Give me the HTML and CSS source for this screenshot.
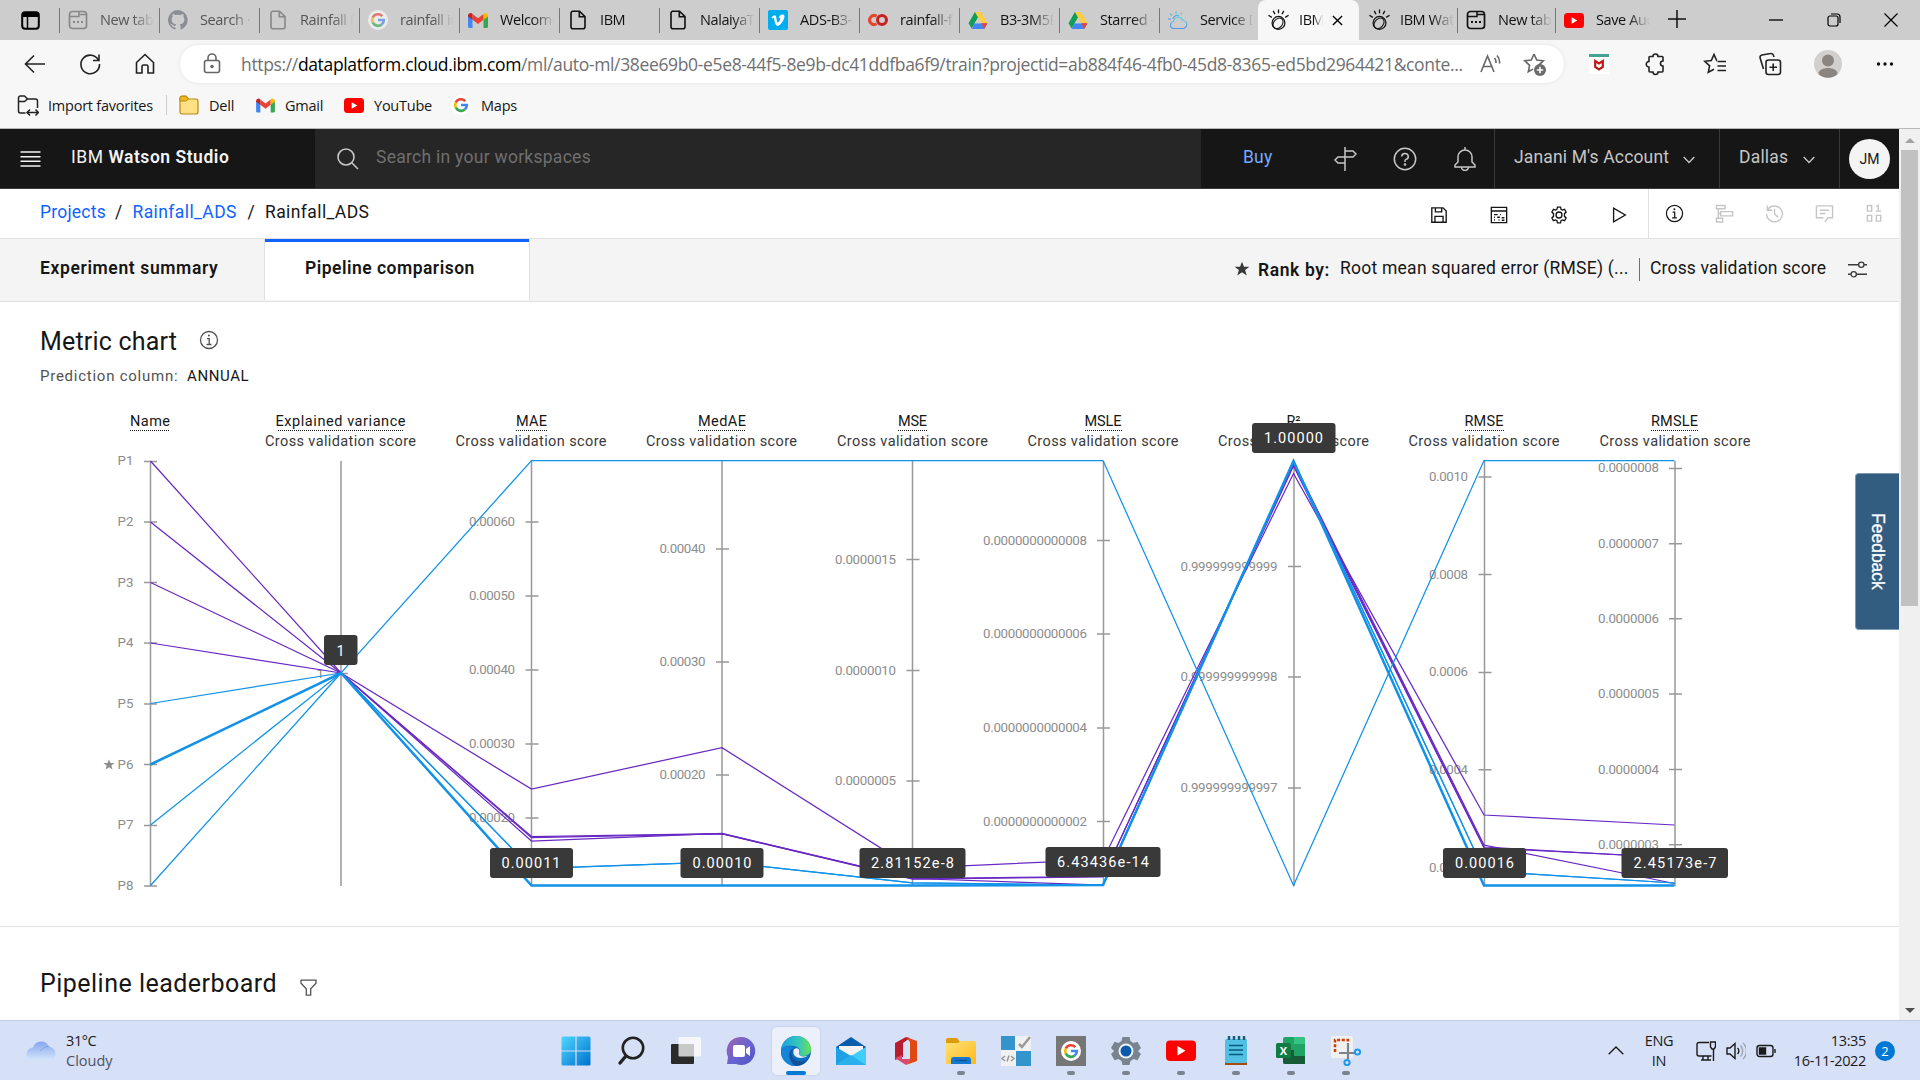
FILE: index.html
```html
<!DOCTYPE html>
<html lang="en">
<head>
<meta charset="utf-8">
<title>IBM Watson Studio</title>
<link rel="stylesheet" href="styles.css">
</head>
<body>
<svg class="defs" width="0" height="0">
  <defs>
    <symbol id="page" viewBox="0 0 20 20"><path d="M4 1.2h7.5L17 6.700v10a2 2 0 0 1-2 2H5a2 2 0 0 1-2-2v-13.500a2 2 0 0 1 2-2zM11.300 1.500v5.300h5.400" fill="none" stroke="currentColor" stroke-width="1.600"/></symbol>
    <symbol id="newtab" viewBox="0 0 20 20"><rect x="1.500" y="1.500" width="17" height="17" rx="3" fill="none" stroke="currentColor" stroke-width="1.700"/><path d="M2 6.500h9V2M11 4.500h7" fill="none" stroke="currentColor" stroke-width="1.500"/><path d="M5 11h2v2H5zM9 11h2v2H9zM13 11h2v2h-2z" fill="currentColor"/></symbol>
    <symbol id="google" viewBox="0 0 24 24"><circle cx="12" cy="12" r="12" fill="#fff"/><g fill="none" stroke-width="3.200"><path d="M17.100 7.300A7 7 0 0 0 5.700 9" stroke="#ea4335"/><path d="M5.700 9a7 7 0 0 0 0 6.100" stroke="#fbbc05"/><path d="M5.700 15a7 7 0 0 0 10.800 2.300" stroke="#34a853"/><path d="M16.500 17.300A7 7 0 0 0 19 12h-7" stroke="#4285f4"/></g></symbol>
    <symbol id="gmail" viewBox="0 0 20 16"><path d="M0 3v11a1.500 1.500 0 0 0 1.500 1.500H4.500V6z" fill="#4285f4"/><path d="M20 3v11a1.500 1.500 0 0 1-1.500 1.500h-3V6z" fill="#34a853"/><path d="M4.500 1.600L10 5.800l5.500-4.200v5.700L10 11.500 4.500 7.300z" fill="#ea4335"/><path d="M0 3a2.500 2.500 0 0 1 4.500-1.400v5.700L0 4z" fill="#c5221f"/><path d="M20 3a2.500 2.500 0 0 0-4.500-1.400v5.700L20 4z" fill="#fbbc04"/></symbol>
    <symbol id="youtube" viewBox="0 0 20 15"><rect width="20" height="15" rx="3.500" fill="#f00"/><path d="M7.700 4.300v6.400l5.600-3.200z" fill="#fff"/></symbol>
    <symbol id="drive" viewBox="0 0 20 18"><path d="M6.700 0h6.600L6.500 12 3.300 17.500 0 12z" fill="#0f9d58"/><path d="M6.700 0h6.600L20 12h-6.500z" fill="#ffcd40"/><path d="M6.500 12H20l-3.300 6H3.300z" fill="#4285f4"/><path d="M6.500 12L10 6l3.500 6z" fill="#cdcdcd"/><path d="M13.500 12H20l-3.300 6z" fill="#ea4335"/></symbol>
    <symbol id="watson" viewBox="0 0 24 24"><g fill="none" stroke="currentColor"><circle cx="12" cy="15" r="6.700" stroke-width="1.300"/><ellipse cx="11.500" cy="15.500" rx="4.500" ry="6.200" transform="rotate(40 11.500 15.500)" stroke-width="1.100"/><path d="M12 1v4M6.500 2.500l1.800 3.500M17.500 2.500l-1.800 3.500M1.500 7l3.500 2.200M22.500 7l-3.500 2.200" stroke-width="1.400"/></g></symbol>
    <symbol id="chevron" viewBox="0 0 12 8"><path d="M.7 1L6 6.600 11.300 1" fill="none" stroke="currentColor" stroke-width="1.400"/></symbol>
    <symbol id="info" viewBox="0 0 20 20"><g fill="none" stroke="currentColor" stroke-width="1.300"><circle cx="10" cy="10" r="8.500"/><path d="M8 8.600h2.200v5.500M7.500 14.500h5"/></g><circle cx="9.900" cy="5.600" r="1" fill="currentColor"/></symbol>
    <symbol id="star" viewBox="0 0 20 20"><path d="M10 .8l2.500 6.300h6.800l-5.400 4.200 2 6.900L10 14.200l-5.900 4 2-6.900L.7 7.100h6.800z" fill="currentColor"/></symbol>
    <linearGradient id="gw" x1="0" y1="0" x2="1" y2="1"><stop offset="0" stop-color="#4ed6ff"/><stop offset="1" stop-color="#0071ce"/></linearGradient>
    <linearGradient id="gc" x1="0" y1="0" x2="0" y2="1"><stop offset="0" stop-color="#85a8ee"/><stop offset="1" stop-color="#d5e5fb"/></linearGradient>
    <linearGradient id="gf" x1="0" y1="0" x2="1" y2="1"><stop offset="0" stop-color="#ffe274"/><stop offset="1" stop-color="#ffb81f"/></linearGradient>
    <linearGradient id="ge" x1="0" y1="0" x2="1" y2="0"><stop offset="0" stop-color="#1a9fe0"/><stop offset=".6" stop-color="#35c9b9"/><stop offset="1" stop-color="#6be052"/></linearGradient>
    <linearGradient id="gt" x1="0" y1="0" x2="1" y2="1"><stop offset="0" stop-color="#a064a8"/><stop offset=".5" stop-color="#6a64d2"/><stop offset="1" stop-color="#4e54c0"/></linearGradient>
    <linearGradient id="gs" x1="0" y1="0" x2="0" y2="1"><stop offset="0" stop-color="#5fd3dc"/><stop offset="1" stop-color="#5a94ee"/></linearGradient>
  </defs>
</svg>

<header class="tabstrip">
  <div class="tab-actions"><svg width="19" height="19" viewBox="0 0 19 19"><rect x="1.200" y="1.200" width="16.600" height="16.600" rx="3" fill="none" stroke="#000" stroke-width="2"/><path d="M1 2h17v4H1z"/><path d="M6.500 5v12" stroke="#000" stroke-width="1.500"/></svg></div>
  <div class="tab asleep"><svg><use href="#newtab"/></svg><span>New tab</span></div>
  <div class="tab asleep"><svg viewBox="0 0 16 16"><path fill="#8b8f94" d="M8 0a8 8 0 0 0-2.500 15.600c.4.100.500-.200.500-.4v-1.500c-2.200.500-2.700-1-2.700-1-.4-.9-.9-1.200-.9-1.200-.7-.5.1-.5.1-.5.800.1 1.200.8 1.200.8.700 1.300 1.900.9 2.300.7.100-.5.300-.9.500-1.100-1.800-.2-3.600-.9-3.600-4 0-.9.300-1.600.8-2.100-.1-.2-.4-1 .1-2.100 0 0 .7-.2 2.200.8a7.700 7.700 0 0 1 4 0c1.500-1 2.200-.8 2.200-.8.400 1.100.2 1.900.1 2.100.5.600.8 1.300.8 2.100 0 3.100-1.900 3.800-3.700 4 .3.300.6.800.6 1.500v2.200c0 .200.100.5.500.4A8 8 0 0 0 8 0z"/></svg><span>Search ·</span></div>
  <div class="tab asleep"><svg><use href="#page"/></svg><span>Rainfall P</span></div>
  <div class="tab asleep"><svg class="dim"><use href="#google"/></svg><span>rainfall in</span></div>
  <div class="tab"><svg class="wide"><use href="#gmail"/></svg><span>Welcome</span></div>
  <div class="tab"><svg><use href="#page"/></svg><span>IBM</span></div>
  <div class="tab"><svg><use href="#page"/></svg><span>NalaiyaTh</span></div>
  <div class="tab"><svg viewBox="0 0 20 20"><rect width="20" height="20" rx="2" fill="#00adef"/><path d="M3.500 7.500C6 5 7.700 4 8.300 7.500c.5 3.200.9 5 1.600 5 1 0 2.500-3 2.300-4-.2-.9-1.200-.4-1.600-.2C11.300 5.500 13 4.300 15 4.600c3 .5 1 5.700-1.600 8.700-2.500 2.900-4.800 4-6.200.3L5.800 8.300c-.3-.9-.8-.4-1.600.2z" fill="#fff"/></svg><span>ADS-B3-3</span></div>
  <div class="tab"><svg viewBox="0 0 20 20" fill="none" stroke-width="3"><path d="M8.600 6.200a4.500 4.500 0 1 0 0 7.600" stroke="#e8432e"/><circle cx="14" cy="10" r="4.500" stroke="#c5221f"/></svg><span>rainfall-f</span></div>
  <div class="tab"><svg class="wide"><use href="#drive"/></svg><span>B3-3M5E</span></div>
  <div class="tab"><svg class="wide"><use href="#drive"/></svg><span>Starred -</span></div>
  <div class="tab w99"><svg viewBox="0 0 20 20" fill="none" stroke="url(#gs)" stroke-width="1.200"><path d="M5 18.500h9.500a4 4 0 0 0 .5-8 5 5 0 0 0-9.500 1A3.600 3.600 0 0 0 5 18.500z"/><path d="M5 9a4 4 0 0 1 6-3M8 4V1M4 5.500L2 3.500M12.500 4.500l1.500-2M3 9H0"/></svg><span>Service D</span></div>
  <div class="tab active"><svg class="big"><use href="#watson"/></svg><span>IBM</span><svg class="x" viewBox="0 0 12 12"><path d="M1 1l10 10M11 1L1 11" stroke="#000" stroke-width="1.500"/></svg></div>
  <div class="tab w98 nosep"><svg class="big"><use href="#watson"/></svg><span>IBM Wat</span></div>
  <div class="tab w98"><svg><use href="#newtab"/></svg><span>New tab</span></div>
  <div class="tab w99"><svg class="yt"><use href="#youtube"/></svg><span>Save Aud</span></div>
  <div class="plus"><svg width="18" height="18" viewBox="0 0 18 18"><path d="M9 0v18M0 9h18" stroke="#111" stroke-width="1.500"/></svg></div>
  <div class="winctl">
    <svg viewBox="0 0 14 14"><path d="M0 7h14" stroke="#000" stroke-width="1.300"/></svg>
    <svg viewBox="0 0 14 14" fill="none" stroke="#000" stroke-width="1.200"><rect x="1" y="3" width="10" height="10" rx="2"/><path d="M4 1h6a3 3 0 0 1 3 3v6"/></svg>
    <svg viewBox="0 0 14 14"><path d="M.5.5l13 13M13.500.5l-13 13" stroke="#000" stroke-width="1.200"/></svg>
  </div>
</header>

<div class="toolbar">
  <svg viewBox="0 0 24 24"><path d="M22 12H3M11 3.500L2.500 12l8.500 8.500"/></svg>
  <svg viewBox="0 0 24 24"><path d="M20.500 8.200A9.300 9.300 0 1 0 21.500 12M21 2.500v6h-6"/></svg>
  <svg viewBox="0 0 24 24"><path d="M3.500 10.500L12 2.500l8.500 8V21h-5.500v-6.500a1.500 1.500 0 0 0-1.500-1.500h-3A1.500 1.500 0 0 0 9 14.500V21H3.500z"/></svg>
  <div class="address">
    <svg class="lock" viewBox="0 0 20 22"><rect x="2.500" y="7.500" width="15" height="12" rx="2"/><path d="M6 7.500V5a4 4 0 0 1 8 0v2.500"/><circle cx="10" cy="13.500" r="1" fill="#666"/></svg>
    <span class="url">https://<b>dataplatform.cloud.ibm.com</b>/ml/auto-ml/38ee69b0-e5e8-44f5-8e9b-dc41ddfba6f9/train?projectid=ab884f46-4fb0-45d8-8365-ed5bd2964421&amp;conte...</span>
    <svg class="aloud" viewBox="0 0 22 20"><path d="M1 18L7.500 2 14 18M3.500 12.500h8M14.500 4a7 7 0 0 1 1.500 5M17 1.500a10 10 0 0 1 2.500 8"/></svg>
    <svg class="favadd" viewBox="0 0 24 24"><path d="M11 2l2.800 6 6.500.8-4.800 4.500.5 1M11 2L8.300 8l-6.500.8 4.800 4.500-1.300 6.500 4.700-2.700"/><circle cx="17" cy="18" r="6" fill="#6b6b6b" stroke="none"/><path d="M17 14.800v6.400M13.800 18h6.400" stroke="#fff"/></svg>
  </div>
  <svg class="shield" viewBox="0 0 20 20"><path d="M0 2h20v18H0z" fill="#fff" stroke="none"/><path d="M0 0h20v3H0z" fill="#43a390" stroke="none"/><path d="M6.200 7v6l3.800 2.500 3.800-2.500V7L10 9.500z" fill="none" stroke="#c01818" stroke-width="2.200"/></svg>
  <svg class="puzzle" viewBox="0 0 24 24"><path d="M7 4.500h3a2.500 2.500 0 0 1 5 0h4a1 1 0 0 1 1 1V9a2.500 2.500 0 0 0 0 5v5a1 1 0 0 1-1 1h-4a2.500 2.500 0 0 1-5 0H7a1 1 0 0 1-1-1v-4a2.600 2.600 0 1 1 0-5.500V5.500a1 1 0 0 1 1-1z"/></svg>
  <i class="vsep"></i>
  <svg viewBox="0 0 24 24"><path d="M14 8.500h-.3L11 2.500 8.300 8.500 1.800 9.300l4.800 4.500-1.300 6.500 5.700-3M14.500 9.500H23M14.500 14H23M14.500 18.500H23"/></svg>
  <svg viewBox="0 0 24 24"><rect x="8" y="8" width="14.500" height="14.500" rx="2.500"/><path d="M15.200 11.500v7.500M11.500 15.200H19M5.500 17L2 5.500A2.500 2.500 0 0 1 4 3l8.500-1.500a2.500 2.500 0 0 1 3 2l.5 1.500"/></svg>
  <svg class="user" viewBox="0 0 28 28"><circle cx="14" cy="14" r="14" fill="#d2d0ce"/><circle cx="14" cy="10.500" r="6" fill="#8a8580"/><path d="M4.500 24c0-8 19-8 19 0a14 14 0 0 1-19 0z" fill="#8a8580"/></svg>
  <svg viewBox="0 0 24 24"><g fill="#111" stroke="none"><circle cx="5.500" cy="12" r="1.700"/><circle cx="12" cy="12" r="1.700"/><circle cx="18.500" cy="12" r="1.700"/></g></svg>
</div>

<div class="bookmarks">
  <svg width="22" height="22" viewBox="0 0 22 22" fill="none" stroke="#222" stroke-width="1.500"><path d="M8.500 19H3.500a2 2 0 0 1-2-2V4a2 2 0 0 1 2-2h4l3 3h8a2 2 0 0 1 2 2v7M1.500 7.500h6l3-2.500M10.500 18.500H21M13 15.500l-3 3 3 3M18.500 15.500l3 3-3 3"/></svg><span>Import favorites</span><i></i>
  <svg width="20" height="20" viewBox="0 0 20 20"><path d="M1 3a2 2 0 0 1 2-2h4l2.500 3H17a2 2 0 0 1 2 2v11a2 2 0 0 1-2 2H3a2 2 0 0 1-2-2z" fill="#ffe082" stroke="#b88a18" stroke-width="1.200"/><path d="M1 6h6l2.500-2L7 1.300H3a2 2 0 0 0-2 2z" fill="#f4b81c" stroke="#b88a18"/></svg><span>Dell</span>
  <svg width="19" height="15"><use href="#gmail"/></svg><span>Gmail</span>
  <svg width="20" height="15"><use href="#youtube"/></svg><span>YouTube</span>
  <svg width="20" height="20"><use href="#google"/></svg><span>Maps</span>
</div>

<div class="viewport">
<main class="app">
  <nav class="shell">
    <svg class="burger" viewBox="0 0 20 16"><path d="M0 1h20M0 5.700h20M0 10.300h20M0 15h20" stroke="#f4f4f4" stroke-width="1.400"/></svg>
    <div class="brand">IBM <b>Watson Studio</b></div>
    <div class="search"><svg width="22" height="22" viewBox="0 0 22 22" fill="none" stroke="#c6c6c6" stroke-width="1.600"><circle cx="9" cy="9" r="8"/><path d="M14.800 14.800L21 21"/></svg><span>Search in your workspaces</span></div>
    <span class="buy">Buy</span>
    <svg class="sic" viewBox="0 0 24 24"><path d="M12 0v24M12 4h8l3 3-3 3h-8zM12 10H5l-3 3 3 3h7z"/></svg>
    <svg class="sic" viewBox="0 0 24 24"><circle cx="12" cy="12" r="10.700"/><path d="M8.700 9.500a3.300 3 0 1 1 4.300 2.900q-1 .4-1 1.500v1"/><circle cx="12" cy="17.500" r=".6"/></svg>
    <svg class="sic" viewBox="0 0 24 24"><path d="M12 0v3M12 3a7 7 0 0 0-7 7v5l-3 3v2h20v-2l-3-3v-5a7 7 0 0 0-7-7zM8.500 20a3.500 3.500 0 0 0 7 0"/></svg>
    <div class="menu account"><span>Janani M's Account</span><svg class="chev"><use href="#chevron"/></svg></div>
    <div class="menu region"><span>Dallas</span><svg class="chev"><use href="#chevron"/></svg></div>
    <div class="menu me"><span class="avatar">JM</span></div>
  </nav>

  <div class="crumbs">
    <a class="c1">Projects</a><i>/</i><a>Rainfall_ADS</a><i>/</i><span>Rainfall_ADS</span>
    <div class="actions">
      <svg viewBox="0 0 20 20"><path d="M2 2h12.500L18 5.500V18H2zM6 2v4.500h7V2M5.500 18v-6.500h9V18"/></svg>
      <svg viewBox="0 0 20 20"><path d="M1.500 1.500h17v17h-17zM1.500 5.500h17M4.500 9.500h4M11 9.500h1M4.500 12.500h1M8 12.500h3M4.500 15.500h1M9.500 15.500h1M13 13h3M13 15.800h3"/></svg>
      <svg viewBox="0 0 20 20"><circle cx="10" cy="10" r="3.300"/><path d="M8.300 1.300h3.400l.6 2.500 1.500.8 2.400-.8 1.700 2.900-1.800 1.800v3l1.800 1.800-1.700 2.900-2.400-.8-1.500.8-.6 2.500H8.300l-.6-2.500-1.500-.8-2.400.8-1.700-2.900 1.800-1.800v-3L2.100 6.700l1.700-2.900 2.400.8 1.500-.8z"/></svg>
      <svg viewBox="0 0 20 20"><path d="M4 2.500v15L17 10z"/></svg>
    </div>
    <div class="panels">
      <svg class="on"><use href="#info"/></svg>
      <svg viewBox="0 0 20 20"><path d="M1.500 1.500h9V5h-9zM6 8h12.500v4.500H6zM1.500 15H8v4H1.500zM3.500 5v10M3.500 10H6"/></svg>
      <svg viewBox="0 0 20 20"><path d="M2.500 1.500v5h5M3 6a8.300 8.300 0 1 1-1.300 4.500M10 5v5.500l4 3.500"/></svg>
      <svg viewBox="0 0 20 20"><path d="M1.500 2h17v12.500h-5L10.500 19M1.500 2v12.500H9M5 6.500h10M5 10h6"/></svg>
      <svg viewBox="0 0 20 20"><path d="M2.500 1.500H7v6H2.500zM2.500 12H7v6H2.500zM12 12h4.500v6H12zM12 2.500l2-1v6M11.500 7.500H17"/></svg>
    </div>
  </div>

  <div class="subtabs">
    <div class="st">Experiment summary</div><div class="st sel"><span>Pipeline comparison</span></div>
    <div class="rank">
      <svg class="rstar"><use href="#star"/></svg><b>Rank by:</b><span class="metric">Root mean squared error (RMSE) (...</span><i></i><span class="cv">Cross validation score</span>
      <svg class="tune" viewBox="0 0 20 20" fill="none" stroke="#393939" stroke-width="1.400"><path d="M0 5h11M17 5h3M0 15h3M9 15h11"/><circle cx="14" cy="5" r="2.800"/><circle cx="6" cy="15" r="2.800"/></svg>
    </div>
  </div>

  <section class="metric-card">
    <div class="head"><h2>Metric chart</h2><svg><use href="#info"/></svg></div>
    <p><span>Prediction column:</span> <em>ANNUAL</em></p>
    <svg class="chart" viewBox="0 400 1899 500" width="1899" height="500">
      <g class="hd">
        <text x="150" y="426" textLength="40">Name</text>
        <text x="340.500" y="426" textLength="130">Explained variance</text>
        <text x="531.500" y="426" textLength="31">MAE</text>
        <text x="722" y="426" textLength="48">MedAE</text>
        <text x="912.500" y="426" textLength="29">MSE</text>
        <text x="1103" y="426" textLength="37">MSLE</text>
        <text x="1293.500" y="426" textLength="14">R²</text>
        <text x="1484" y="426" textLength="39">RMSE</text>
        <text x="1674.500" y="426" textLength="47">RMSLE</text>
      </g>
      <path class="dots" d="M130 430.500h40M278 430.500h125M516 430.500h31M698 430.500h48M898 430.500h29M1085 430.500h37M1465 430.500h39M1651 430.500h47"/>
      <g class="cvs">
        <text x="340.500" y="446" textLength="151">Cross validation score</text>
        <text x="531" y="446" textLength="151">Cross validation score</text>
        <text x="721.500" y="446" textLength="151">Cross validation score</text>
        <text x="912.500" y="446" textLength="151">Cross validation score</text>
        <text x="1103" y="446" textLength="151">Cross validation score</text>
        <text x="1293.500" y="446" textLength="151">Cross validation score</text>
        <text x="1484" y="446" textLength="151">Cross validation score</text>
        <text x="1675" y="446" textLength="151">Cross validation score</text>
      </g>
      <path class="axes" d="M150.500 461v425M341 461v425M531.500 461v425M722 461v425M912.500 461v425M1103.500 461v425M1294 461v425M1484.500 461v425M1675 461v425
        M144 461.500h13M144 522h13M144 582.500h13M144 643h13M144 704h13M144 764.500h13M144 825.500h13M144 886h13M335 673.500h13
        M525.500 522h13M525.500 596h13M525.500 670h13M525.500 744h13M525.500 818h13
        M716 549h13M716 662h13M716 775h13
        M906.500 559.500h13M906.500 670.500h13M906.500 781h13
        M1097 540.500h13M1097 634h13M1097 728h13M1097 821.500h13
        M1288 566.500h13M1288 677h13M1288 788h13
        M1478.500 477h13M1478.500 574.500h13M1478.500 672.500h13M1478.500 769.700h13M1478.500 867h13
        M1669 468.500h13M1669 543.700h13M1669 618.800h13M1669 694h13M1669 769.500h13M1669 844.700h13"/>
      <g class="tick">
        <text x="133.500" y="465" textLength="16">P1</text><text x="133.500" y="526" textLength="16">P2</text><text x="133.500" y="586.500" textLength="16">P3</text><text x="133.500" y="647" textLength="16">P4</text><text x="133.500" y="708" textLength="16">P5</text><text x="133.500" y="768.500" textLength="16">P6</text><text x="133.500" y="829" textLength="16">P7</text><text x="133.500" y="890" textLength="16">P8</text>
        <text x="324" y="677.500">1</text>
        <text x="515" y="526" textLength="46">0.00060</text><text x="515" y="600" textLength="46">0.00050</text><text x="515" y="674" textLength="46">0.00040</text><text x="515" y="748" textLength="46">0.00030</text><text x="515" y="822" textLength="46">0.00020</text>
        <text x="705.500" y="553" textLength="46">0.00040</text><text x="705.500" y="666" textLength="46">0.00030</text><text x="705.500" y="779" textLength="46">0.00020</text>
        <text x="896" y="564" textLength="61">0.0000015</text><text x="896" y="675" textLength="61">0.0000010</text><text x="896" y="785" textLength="61">0.0000005</text>
        <text x="1087" y="545" textLength="104">0.0000000000008</text><text x="1087" y="638" textLength="104">0.0000000000006</text><text x="1087" y="732" textLength="104">0.0000000000004</text><text x="1087" y="826" textLength="104">0.0000000000002</text>
        <text x="1277.500" y="571" textLength="97">0.999999999999</text><text x="1277.500" y="681" textLength="97">0.999999999998</text><text x="1277.500" y="792" textLength="97">0.999999999997</text>
        <text x="1468" y="481" textLength="39">0.0010</text><text x="1468" y="579" textLength="39">0.0008</text><text x="1468" y="676" textLength="39">0.0006</text><text x="1468" y="774" textLength="39">0.0004</text><text x="1468" y="872" textLength="39">0.0002</text>
        <text x="1659" y="472" textLength="61">0.0000008</text><text x="1659" y="548" textLength="61">0.0000007</text><text x="1659" y="623" textLength="61">0.0000006</text><text x="1659" y="698" textLength="61">0.0000005</text><text x="1659" y="774" textLength="61">0.0000004</text><text x="1659" y="849" textLength="61">0.0000003</text>
      </g>
      <path d="M109 759.500l1.500 3.600h4l-3.200 2.500 1.200 4-3.500-2.400-3.500 2.400 1.200-4-3.200-2.500h4z" fill="#8d8d8d"/>
      <g class="purple">
        <path d="M150.500 461L341 673 531.500 789 722 747.700 912.500 868 1103 859.700 1293.500 473.500 1484 815 1674.500 825"/>
        <path d="M150.500 522L341 673 531.500 836.500 722 833.700 912.500 878.500 1103 876.500 1293.500 466 1484 848 1674.500 857.500"/>
        <path d="M150.500 582.500L341 673 531.500 837.500 722 834 912.500 879 1103 877 1293.500 464 1484 847 1674.500 858"/>
        <path d="M150.500 643L341 673 531.500 841 722 833.500 912.500 878.500 1103 885 1293.500 462 1484 845 1674.500 883.500"/>
      </g>
      <g class="blue">
        <path d="M150.500 703.500L341 673 531.500 460.500H1103L1293.500 885.500 1484 460.500H1674.500"/>
        <path d="M150.500 825L341 673 531.500 868.500 722 862 912.500 882.800 1103 885.300 1293.500 461 1484 871 1674.500 883"/>
        <path d="M150.500 885.500L341 673 531.500 868.500 722 862 912.500 882.800 1103 885.300 1293.500 461 1484 871 1674.500 883"/>
        <path class="best" d="M150.500 764.500L341 673 531.500 885.600H912.500L1103 885 1293.500 461 1484 885.600H1674.500"/>
      </g>
      <g class="tipbox"><rect x="324" y="635" width="33.500" height="30" rx="3"/><rect x="490" y="848" width="83" height="30" rx="3"/><rect x="680.500" y="848" width="83" height="30" rx="3"/><rect x="859.500" y="848" width="106" height="30" rx="3"/><rect x="1045.500" y="847" width="115" height="30" rx="3"/><rect x="1252" y="423" width="83.500" height="30" rx="3"/><rect x="1443" y="848" width="83" height="30" rx="3"/><rect x="1621.500" y="848" width="106.500" height="30" rx="3"/></g>
      <g class="tiptext">
        <text x="340.500" y="656">1</text>
        <text x="531" y="868" textLength="59">0.00011</text><text x="722" y="868" textLength="59">0.00010</text><text x="912.500" y="868" textLength="83">2.81152e-8</text><text x="1103" y="867" textLength="92">6.43436e-14</text><text x="1293.500" y="443" textLength="59">1.00000</text><text x="1484.500" y="868" textLength="59">0.00016</text><text x="1675" y="868" textLength="83">2.45173e-7</text>
      </g>
    </svg>
  </section>

  <section class="board"><h2>Pipeline leaderboard</h2><svg width="17" height="17" viewBox="0 0 17 17" fill="none" stroke="#525252" stroke-width="1.300"><path d="M1 1.200h15v3l-5.300 5.500v6.500H6.300V9.700L1 4.200z"/></svg></section>
  <div class="feedback"><span>Feedback</span></div>
</main>
<aside class="scroll"><i class="up"></i><div class="thumb"></div><i class="down"></i></aside>
</div>

<footer class="taskbar">
  <div class="weather">
    <svg width="32" height="20" viewBox="0 0 32 20"><path d="M7 19.500a6.500 6.500 0 0 1 0-13A8.500 8.500 0 0 1 23 6a7 7 0 0 1 2 13.500z" fill="url(#gc)"/><path d="M14 10q6-6 10-4" fill="none" stroke="#6b8fe0" opacity=".5"/></svg>
    <div><b>31°C</b><span>Cloudy</span></div>
  </div>
  <div class="apps">
    <div class="ap"><svg viewBox="0 0 30 30"><rect x=".5" y=".5" width="29" height="29" rx="1.500" fill="url(#gw)"/><path d="M15 0v30M0 15h30" stroke="#d6e0f7" stroke-width="1.200"/></svg></div>
    <div class="ap"><svg viewBox="0 0 30 30" fill="none" stroke="#222" stroke-linecap="round"><circle cx="17" cy="12" r="10.200" stroke-width="2.600"/><path d="M9.500 20.500L4 27" stroke-width="3.400"/></svg></div>
    <div class="ap"><svg viewBox="0 0 30 30"><rect x="0" y="8" width="23" height="20" rx="1" fill="#2b2b2b"/><rect x="7.500" y="1" width="22.500" height="19.500" rx="1" fill="#fff" opacity=".75"/></svg></div>
    <div class="ap"><svg viewBox="0 0 30 30"><path d="M15 1a14 14 0 1 1-5 27H1l1-7A14 14 0 0 1 15 1z" fill="url(#gt)"/><rect x="7" y="9" width="12" height="12" rx="2" fill="#fff"/><path d="M20 13l4-3v10l-4-3z" fill="#fff"/></svg></div>
    <div class="ap current"><svg viewBox="0 0 30 30"><circle cx="15" cy="15" r="15" fill="#0c6cc0"/><path d="M0 14C1 5 8 0 15 0c9 0 15 6 15 13 0 5-4 7-8 7-3 0-4-1-3.500-2 2-3 0-7-5.500-8C7 9 2 10 0 14z" fill="url(#ge)"/><path d="M12 13c-3 3-2 10 4 12 5 1 9 0 11.500-2.500C25 27 21 30 15 30 8 30 3 26 5 19c1-4 4-6 7-6z" fill="#135096"/><path d="M0 14c2-4 9-5 13-2-4 1-6 6-4 11 1 3 3 6 6 7C6 30-1 23 0 14z" fill="#1583d8"/><path d="M12.500 14c2-3 6-2 6 1 0 2-1 3 .5 4.500 2 1.500 5 1 7.500 0C25 22 15 24 12.500 18z" fill="#ebf0fb"/></svg></div>
    <div class="ap"><svg viewBox="0 0 30 30"><path d="M0 11L15 1l15 10v3H0z" fill="#0a5cad"/><path d="M3 10h24v8l-12 7-12-7z" fill="#f3f3f3"/><path d="M0 11l15 9L30 29H0z" fill="#1fa0e4"/><path d="M30 11L15 20 30 29z" fill="#40cdf8"/><path d="M0 29h30L15 19z" fill="#2ab0ec"/></svg></div>
    <div class="ap"><svg viewBox="0 0 30 30"><path d="M4 7L15 1l4 1-7 5v14l-8 3z" fill="#b91c2e"/><path d="M15 1l11 4v20l-11 4 4-5V6z" fill="#e04a12"/><path d="M4 22l7-3v4h9l-5 6z" fill="#d9486e"/></svg></div>
    <div class="ap run"><svg viewBox="0 0 30 30"><path d="M0 4a2 2 0 0 1 2-2h9l3 4v6H0z" fill="#dc9c0c"/><path d="M0 7h12l3-2h13a2 2 0 0 1 2 2v21H0z" fill="url(#gf)"/><path d="M5 28v-4a3 3 0 0 1 3-3h14a3 3 0 0 1 3 3v4z" fill="#1278cf"/><path d="M9 24.500h12" stroke="#064f91" stroke-width="1.300"/></svg></div>
    <div class="ap"><svg viewBox="0 0 30 30"><path d="M0 0h30v30H0z" fill="#f1f1f1"/><path d="M0 0h14v14H0zM15 15h15v15H15z" fill="#3495cc"/><path d="M18 8l3 3 8-10" fill="none" stroke="#999" stroke-width="2.500"/><path d="M4 20l-3 2.500L4 25M8 19.500l-2 6M10 20l3 2.500-3 2.500" fill="none" stroke="#999" stroke-width="1.500"/></svg></div>
    <div class="ap run"><svg viewBox="0 0 30 30"><path d="M0 0h30v30H0z" fill="#767676"/><use href="#google" x="5" y="5" width="20" height="20"/></svg></div>
    <div class="ap run"><svg viewBox="0 0 30 30"><path d="M11.500 1h7l1 4 3 2 4-1.300L30 12l-3 3 3 3-3.500 6.300-4-1.300-3 2-1 4h-7l-1-4-3-2-4 1.300L0 18l3-3-3-3 3.500-6.300 4 1.300 3-2z" fill="#7a8490"/><circle cx="15" cy="15" r="7.500" fill="#eef3fa"/><circle cx="15" cy="15" r="5.500" fill="#0b5bac"/></svg></div>
    <div class="ap run"><svg viewBox="0 0 30 30"><rect y="4.500" width="30" height="20.500" rx="4" fill="#f00"/><path d="M11.500 10v9.500l8-4.700z" fill="#fff"/></svg></div>
    <div class="ap run"><svg viewBox="0 0 30 30"><path d="M4 26h22v3H4z" fill="#a34f0b"/><rect x="4" y="3" width="22" height="24" rx="1.500" fill="#51c0e4"/><path d="M8 9.500h14M8 14h14M8 18.500h14" stroke="#065a7d" stroke-width="1.700"/><path d="M8 0v4M13 0v4M18 0v4M23 0v4" stroke="#12617c" stroke-width="2.500"/></svg></div>
    <div class="ap run"><svg viewBox="0 0 30 30"><rect x="7" y="1" width="22" height="27" rx="2" fill="#21a366"/><path d="M18 1h9a2 2 0 0 1 2 2v5H18z" fill="#33c481"/><path d="M7 14h11v14H9a2 2 0 0 1-2-2zM18 20h11v8H18z" fill="#185c37"/><rect x="0" y="7" width="15" height="15" rx="1.500" fill="#107c41"/><text x="7.500" y="19" class="xl">X</text></svg></div>
    <div class="ap run"><svg viewBox="0 0 30 30"><rect width="22" height="22" rx="2" fill="#f1f1f1"/><path d="M4 16V4h13v2" fill="none" stroke="#d83b01" stroke-width="2.500" stroke-dasharray="3 1.700"/><path d="M17 7v16M8 17h16" stroke="#7d858c" stroke-width="2.200"/><circle cx="26.500" cy="16" r="2.600" fill="none" stroke="#1d9be8" stroke-width="2"/><circle cx="16" cy="26.500" r="2.600" fill="none" stroke="#1d9be8" stroke-width="2"/></svg></div>
  </div>
  <div class="tray">
    <svg class="up" viewBox="0 0 16 9"><path d="M.7 8.300L8 1l7.300 7.300"/></svg>
    <div class="lang"><span>ENG</span><span>IN</span></div>
    <svg class="net" viewBox="0 0 20 20"><path d="M13 1.500H3a2 2 0 0 0-2 2v9.500a2 2 0 0 0 2 2h12.500M5 19h10M7 15v4M12 15v4M17.500 8v12M14.500 1h5v5l-1.500 2h-2l-1.500-2z"/></svg>
    <svg class="vol" viewBox="0 0 20 20"><path d="M1 7h3l5-4.500v15L4 13H1zM11.500 7a4 4 0 0 1 0 6"/><path d="M14.500 4.500a8 8 0 0 1 0 11M17 2a11 11 0 0 1 0 16" opacity=".3"/></svg>
    <svg class="bat" viewBox="0 0 20 20"><rect x="1" y="4.500" width="16" height="11" rx="2.500"/><path d="M3.500 7h6v6h-6z" fill="#1b1b1b"/><path d="M19 8v4"/></svg>
    <div class="clock"><span>13:35</span><span>16-11-2022</span></div>
    <div class="badge">2</div>
  </div>
</footer>
</body>
</html>
```

FILE: styles.css
```css
* { box-sizing: border-box; }
body { margin: 0; width: 1920px; height: 1080px; overflow: hidden; background: #fff; font-family: "Open Sans", "Noto Sans", sans-serif; color: #161616; }
.defs { display: block; position: absolute; }
svg { flex: none; display: block; }
h2, p { margin: 0; font-weight: 400; }

/* tab strip */
.tabstrip { height: 40px; background: #cdcdcd; display: flex; align-items: center; font-size: 14.5px; }
.tab-actions { width: 59px; padding-left: 21px; }
.tab { width: 100px; height: 40px; display: flex; align-items: center; position: relative; padding-left: 9px; color: #111; }
.tab::before { content: ""; position: absolute; left: 0; top: 8px; width: 1px; height: 25px; background: #777; }
.tab svg { width: 20px; height: 20px; margin-right: 12px; }
.tab svg.wide { height: 17px; }
.tab svg.yt { height: 15px; }
.tab svg.dim { opacity: .6; }
.tab span { width: 54px; overflow: hidden; white-space: nowrap; letter-spacing: -.4px; padding-bottom: 1px; mask-image: linear-gradient(90deg, #000 60%, transparent 100%); }
.asleep { color: #555; }
.asleep svg { color: #888; }
.w99 { width: 99px; }
.w98 { width: 98px; }
.nosep::before, .active::before { display: none; }
.tab svg.big { width: 23px; height: 24px; margin-left: 0; margin-right: 9px; }
.active { width: 101px; background: #f7f7f7; border-radius: 8px 8px 0 0; }
.tab.active span { width: 24px; }
.tab svg.x { width: 11px; height: 11px; margin: 1px 0 0 9px; }
.plus { width: 46px; padding: 0 0 2px 14px; }
.winctl { display: flex; gap: 43.500px; margin-left: 69px; }
.winctl svg { width: 14px; height: 14px; }

/* browser toolbar */
.toolbar { height: 48px; background: #f7f7f7; display: flex; align-items: center; padding-left: 23px; }
.toolbar svg { width: 24px; height: 24px; fill: none; stroke: #222; stroke-width: 1.600; margin-right: 31px; }
.address { width: 1384px; flex: none; height: 38px; border-radius: 19px; background: #fff; margin: 0 25px 0 -8px; display: flex; align-items: center; padding-left: 22px; box-shadow: 0 0 4px #e4e4e4; }
.address svg { stroke: #666; }
.address .lock { width: 20px; height: 22px; margin: 0; }
.url { width: 1239px; flex: none; margin-left: 19px; font-size: 17.500px; color: #707070; white-space: nowrap; letter-spacing: -.35px; }
.url b { font-weight: 400; color: #000; }
.address .aloud { width: 22px; height: 20px; margin: 0 21px 0 0; }
.address .favadd { width: 24px; margin: 0; }
.toolbar .shield { width: 20px; height: 20px; margin-right: 34px; stroke: none; }
.toolbar .puzzle { margin-right: 18px; }
.vsep { width: 1px; height: 20px; background: #c8c8c8; margin-right: 18px; }
.toolbar .user { width: 28px; height: 28px; stroke: none; margin-right: 31px; margin-left: 1px; }

.bookmarks { height: 41px; background: #f7f7f7; border-bottom: 1px solid #b8b8b8; padding: 0 0 6px 17px; display: grid; grid-template-columns: 31px 118px 13px 30px 47px 29px 59px 30px 77px 30px 60px; align-items: center; font-size: 14.500px; letter-spacing: -.23px; white-space: nowrap; }
.bookmarks i { width: 1px; height: 20px; background: #ccc; }

/* page */
.viewport { display: flex; height: 891px; font-family: Roboto, "Liberation Sans", sans-serif; }
.app { width: 1899px; position: relative; }
.shell { height: 60px; background: #161616; border-bottom: 1px solid #393939; display: flex; align-items: center; color: #c6c6c6; font-size: 17.500px; }
.burger { width: 21px; height: 16px; margin: 0 30px 0 20px; }
.brand { width: 244px; color: #f4f4f4; white-space: nowrap; padding-bottom: 3px; letter-spacing: .53px; }
.brand b { font-weight: 600; }
.search { width: 886px; height: 59px; background: #262626; display: flex; align-items: center; padding-left: 22px; color: #6f6f6f; }
.search span { margin-left: 17px; padding-bottom: 3px; letter-spacing: .27px; }
.buy { width: 90px; margin-left: 42px; color: #78a9ff; padding-bottom: 3px; letter-spacing: .2px; }
.sic { width: 24px; height: 24px; fill: none; stroke: #c6c6c6; stroke-width: 1.500; margin-right: 36px; }
.sic + .menu { margin-left: -19px; }
.menu { height: 59px; border-left: 1px solid #393939; display: flex; align-items: center; padding-left: 19px; }
.menu > span:first-child { padding-bottom: 3px; white-space: nowrap; }
.account { width: 225px; }
.account span { width: 169px; letter-spacing: .15px; }
.region { width: 120px; }
.region span { width: 64px; letter-spacing: .2px; }
.chev { width: 12px; height: 8px; margin-top: 3px; }
.me { padding-left: 9px; }
.menu.me > .avatar { width: 41px; height: 40px; border-radius: 50%; background: #f4f4f4; color: #161616; font-size: 14px; padding: 0; display: flex; align-items: center; justify-content: center; }

.crumbs { height: 50px; border-bottom: 1px solid #e0e0e0; display: flex; font-size: 17.500px; padding: 0 0 0 40px; line-height: 47px; letter-spacing: .4px; }
.crumbs a { color: #0f62fe; width: 105px; }
.crumbs a.c1 { width: 65px; letter-spacing: .22px; }
.crumbs i { font-style: normal; width: 27.500px; text-align: center; }
.actions { margin-left: auto; display: flex; align-items: center; gap: 42px; padding: 3px 20px 0 0; }
.actions svg { width: 18px; height: 18px; fill: none; stroke: #161616; stroke-width: 1.500; }
.panels { width: 251px; border-left: 1px solid #e0e0e0; display: flex; align-items: center; gap: 31px; padding: 0 0 1px 16px; }
.panels svg { width: 19px; height: 19px; fill: none; stroke: #c6c6c6; stroke-width: 1.500; }
.panels .on { color: #161616; stroke: none; }

.subtabs { height: 63px; background: #f4f4f4; border-bottom: 1px solid #e0e0e0; display: flex; font-size: 17.500px; line-height: 58px; white-space: nowrap; }
.st { width: 264px; padding-left: 40px; font-weight: 600; letter-spacing: .62px; }
.sel { width: 266px; height: 61px; background: #fff; border: solid #e0e0e0; border-width: 0 1px; box-shadow: inset 0 3px #0f62fe; letter-spacing: .48px; }
.rank { margin-left: auto; width: 666px; display: flex; align-items: center; height: 58px; }
.rstar { width: 16px; height: 16px; color: #393939; margin: 2px 8px 0 1px; }
.rank b { width: 82px; font-weight: 600; padding-top: 3px; letter-spacing: .6px; }
.metric { width: 299px; letter-spacing: .24px; }
.cv { width: 198px; letter-spacing: .17px; }
.rank i { width: 1px; height: 23px; background: #6f6f6f; margin-right: 10px; margin-top: 3px; }
.tune { width: 19px; height: 19px; margin-top: 3px; }

.metric-card { height: 625px; border-bottom: 1px solid #e0e0e0; }
.head { display: flex; align-items: center; height: 78px; padding-left: 40px; }
h2 { font-size: 25px; letter-spacing: .2px; white-space: nowrap; }
.head h2 { width: 159px; }
.head svg { width: 20px; height: 20px; color: #525252; margin-bottom: 2px; }
.metric-card p { height: 20px; line-height: 20px; margin-top: -14px; padding-left: 40px; font-size: 15px; letter-spacing: .75px; display: flex; color: #525252; white-space: nowrap; }
.metric-card p span { width: 147px; }
.metric-card em { font-style: normal; color: #161616; letter-spacing: .6px; }
.chart { margin-top: 14px; }
.chart text { text-anchor: middle; font-size: 14.500px; }
.hd { fill: #161616; }
.cvs { fill: #393939; }
.dots { stroke: #161616; stroke-dasharray: 1 1; }
.axes { stroke: #999; stroke-width: 1.500; fill: none; }
.chart .tick text { text-anchor: end; font-size: 13.300px; fill: #8d8d8d; }
.purple, .blue { fill: none; stroke-width: 1.250; }
.purple { stroke: #6929c4; }
.blue { stroke: #1192e8; }
.best { stroke-width: 2.500; }
.tipbox { fill: #393939; }
.chart .tiptext text { fill: #fff; font-size: 14.500px; }

.board { display: flex; padding: 38px 0 0 40px; }
.board h2 { width: 260px; line-height: 38px; letter-spacing: .48px; }
.board svg { margin-top: 14px; }
.feedback { position: absolute; right: 0; top: 344px; width: 44px; height: 157px; background: #325c80; border: 1px solid #7d9ab3; border-right: 0; border-radius: 4px 0 0 4px; display: flex; align-items: center; justify-content: center; }
.feedback span { writing-mode: vertical-rl; font: 17.500px "Liberation Sans", sans-serif; color: #fff; -webkit-text-stroke: .3px #fff; }

.scroll { width: 21px; background: #f0f0f0; display: flex; flex-direction: column; align-items: center; padding: 9px 0 7px; }
.scroll i { border: 5px solid transparent; }
.scroll .up { border-top: 0; border-bottom-color: #a3a3a3; }
.scroll .down { border-bottom: 0; border-top-color: #505050; margin-top: auto; }
.thumb { width: 17px; height: 456px; background: #c1c1c1; margin-top: 7px; }

/* taskbar */
.taskbar { height: 60px; background: #d6e0f7; border-top: 1px solid #c1cde8; display: flex; font-size: 14.500px; color: #1b1b1b; }
.weather { width: 548px; display: flex; align-items: center; padding-left: 26px; }
.weather div { margin-left: 8px; line-height: 20px; }
.weather b, .weather span { display: block; font-weight: 400; letter-spacing: -.4px; }
.weather span { color: #4c5260; letter-spacing: 0; }
.apps { display: flex; align-items: center; gap: 7px; margin-left: 4px; }
.ap { width: 48px; height: 48px; border-radius: 5px; display: flex; justify-content: center; align-items: center; position: relative; }
.ap svg { width: 30px; height: 30px; }
.ap.current { background: #ebf0fb; box-shadow: 0 0 0 1px #cbd6ee; }
.run::after, .current::after { content: ""; position: absolute; bottom: 0; left: 20px; width: 8px; height: 4px; border-radius: 2px; background: #7b8290; }
.current::after { left: 14px; width: 20px; background: #0078d4; }
.xl { font: 700 11px "Open Sans", sans-serif; fill: #fff; text-anchor: middle; }
.tray { margin-left: auto; width: 312px; display: flex; align-items: center; line-height: 20px; }
.tray svg { fill: none; stroke: #1b1b1b; stroke-width: 1.400; width: 20px; height: 20px; margin-right: 10px; }
.tray svg.up { width: 16px; height: 9px; margin-right: 16px; }
.lang { width: 38px; text-align: center; margin-right: 18px; }
.lang span, .clock span { display: block; letter-spacing: -.35px; }
.clock { width: 80px; text-align: right; margin-right: 9px; white-space: nowrap; }
.badge { width: 20px; height: 20px; border-radius: 50%; background: #0078d4; color: #fff; text-align: center; font-size: 13px; }
```
